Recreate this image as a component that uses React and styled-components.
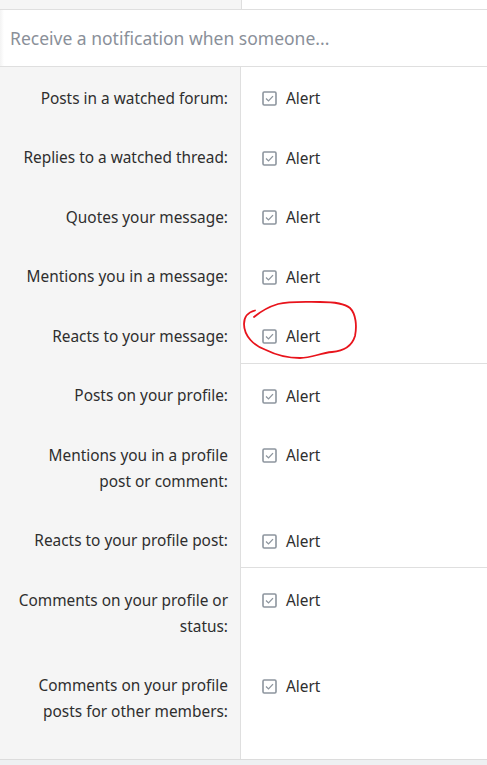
import styled, { createGlobalStyle } from "styled-components";

const rows = [
  { label: ["Posts in a watched forum:"] },
  { label: ["Replies to a watched thread:"] },
  { label: ["Quotes your message:"] },
  { label: ["Mentions you in a message:"] },
  { label: ["Reacts to your message:"], circled: true },
  { label: ["Posts on your profile:"], divider: true },
  { label: ["Mentions you in a profile", "post or comment:"] },
  { label: ["Reacts to your profile post:"] },
  { label: ["Comments on your profile or", "status:"], divider: true },
  { label: ["Comments on your profile", "posts for other members:"], last: true },
];

const CheckIcon = () => (
  <svg width="15" height="15" viewBox="0 0 15 15">
    <rect x="1" y="1" width="13" height="13" rx="1.2" fill="#fff" stroke="#8d959e" strokeWidth="1.6" />
    <path d="M4 7.6 L6.5 9.9 L11 5.1" fill="none" stroke="#8d959e" strokeWidth="1.3" />
  </svg>
);

const Scribble = () => (
  <svg width="120" height="66" viewBox="0 0 120 66">
    <path
      d="M15 14.5 C9 16 4 20 4 28 C4 40 14 50 26 54 C38 60 50 62 60 62 C72 62 80 57 92 56 C104 55 112 50 115 40 C117 30 116 18 110 12 C104 7 92 6 80 6 C66 6 50 5 38 8 C28 11 20 16 14 21"
      fill="none"
      stroke="#e8141c"
      strokeWidth="1.8"
      strokeLinecap="round"
    />
  </svg>
);

export default function App() {
  return (
    <>
      <GlobalStyle />
      <Page>
        <TopStrip>
          <LeftCell />
          <RightCell />
        </TopStrip>
        <Header>Receive a notification when someone...</Header>
        <Table>
          {rows.map((row, i) => (
            <Row key={i}>
              <Label $last={row.last}>
                {row.label.map((line, j) => (
                  <span key={j}>{line}</span>
                ))}
              </Label>
              <Control $divider={row.divider}>
                <Choice>
                  <CheckIcon />
                  <span>Alert</span>
                  {row.circled && (
                    <Circle>
                      <Scribble />
                    </Circle>
                  )}
                </Choice>
              </Control>
            </Row>
          ))}
        </Table>
        <Footer />
      </Page>
    </>
  );
}

const GlobalStyle = createGlobalStyle`
  body {
    margin: 0;
    background: #fff;
    font-family: "Noto Sans", "Open Sans", sans-serif;
  }
`;

const Page = styled.div`
  width: 487px;
  height: 765px;
  overflow: hidden;
  display: flex;
  flex-direction: column;
`;

const TopStrip = styled.div`
  display: flex;
  height: 9px;
  border-bottom: 1px solid #dfdfdf;
`;

const LeftCell = styled.div`
  width: 241px;
  background: #f5f5f5;
  border-right: 1px solid #dfdfdf;
`;

const RightCell = styled.div`
  flex: 1;
`;

const Header = styled.div`
  height: 56px;
  display: flex;
  align-items: center;
  padding: 0 10px;
  font-size: 17.5px;
  color: #8a9099;
  border-bottom: 1px solid #dfdfdf;
  background: linear-gradient(90deg, #f3f3f3 0, #fff 4px);
`;

const Table = styled.div`
  display: flex;
  flex-direction: column;
`;

const Row = styled.div`
  display: grid;
  grid-template-columns: 241px 1fr;
  align-items: start;
`;

const Label = styled.div`
  align-self: stretch;
  background: #f5f5f5;
  border-right: 1px solid #dfdfdf;
  padding: 18.5px 12px ${(p) => (p.$last ? "34px" : "15px")} 10px;
  display: flex;
  flex-direction: column;
  align-items: flex-end;
  text-align: right;
  font-size: 15.4px;
  line-height: 26px;
  color: #2e2e2e;
`;

const Control = styled.div`
  padding: ${(p) => (p.$divider ? "19.5px" : "18.5px")} 21px 15px;
  border-top: ${(p) => (p.$divider ? "1px solid #dfdfdf" : "none")};
  margin-top: ${(p) => (p.$divider ? "-2px" : "0")};
`;

const Choice = styled.div`
  position: relative;
  display: flex;
  align-items: center;
  gap: 9px;
  height: 26px;
  font-size: 15.4px;
  color: #2e2e2e;

  svg {
    flex-shrink: 0;
  }
`;

const Circle = styled.div`
  position: absolute;
  left: -22px;
  top: -28px;
  pointer-events: none;
`;

const Footer = styled.div`
  flex: 1;
  background: #eef0f2;
  border-top: 1px solid #dcdcdc;
`;
